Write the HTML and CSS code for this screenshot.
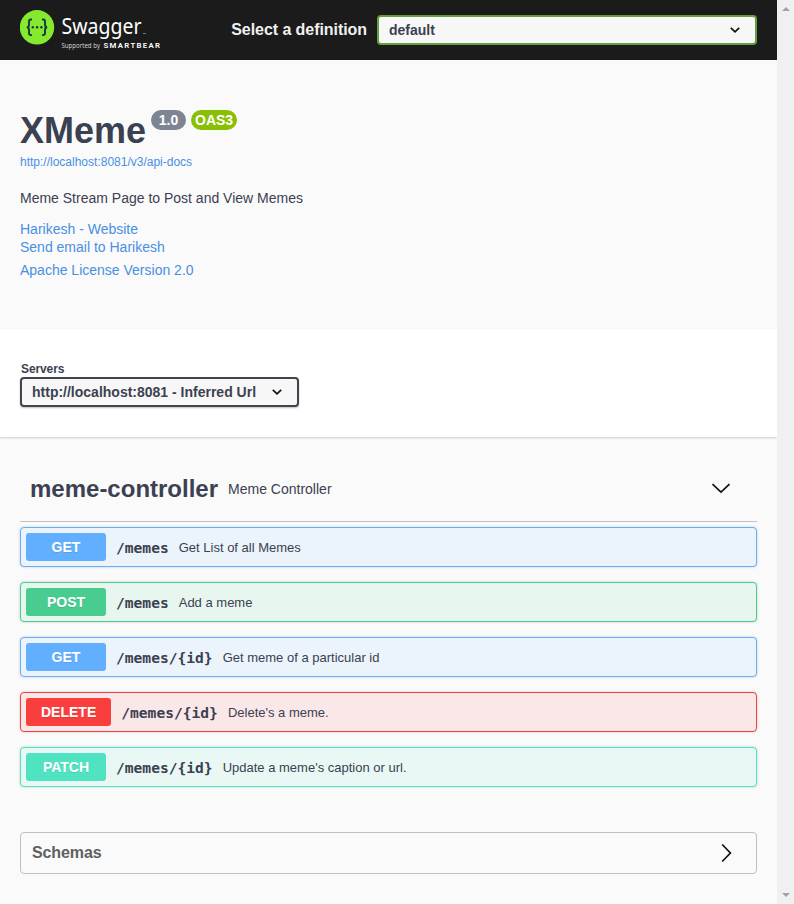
FILE: index.html
```html
<!DOCTYPE html>
<html lang="en">
<head>
<meta charset="utf-8">
<title>Swagger UI</title>
<link rel="stylesheet" href="styles.css">
</head>
<body>
<div class="page">
<main class="content">
  <header class="topbar">
    <svg class="logo" width="150" height="60" viewBox="0 0 150 60" role="img" aria-label="Swagger">
      <circle cx="17" cy="27.3" r="17.2" fill="#85ea2d"/>
      <g fill="none" stroke="#173647" stroke-width="1.9">
        <path d="M12 19.500h-1.200q-1.800 0-1.800 2v3q0 2.800-2.200 2.800q2.200 0 2.200 2.800v3q0 2 1.800 2H12"/>
        <path d="M22 19.500h1.200q1.800 0 1.800 2v3q0 2.800 2.200 2.800q-2.200 0-2.200 2.800v3q0 2-1.800 2H22"/>
      </g>
      <g fill="#173647"><circle cx="12.8" cy="27.3" r="1.2"/><circle cx="17.1" cy="27.3" r="1.2"/><circle cx="21.4" cy="27.3" r="1.2"/></g>
      <text class="logo-name" x="41.5" y="34" textLength="80" lengthAdjust="spacingAndGlyphs">Swagger</text>
      <path d="M123 33.5h3" stroke="#888" stroke-width=".8"/>
      <text class="logo-by" x="41.5" y="48" textLength="38.5" lengthAdjust="spacingAndGlyphs">Supported by</text>
      <text class="logo-brand" x="83.5" y="48" textLength="56.5" lengthAdjust="spacing">SMARTBEAR</text>
    </svg>
    <label class="definition"><span>Select a definition</span>
      <span class="select select-top">default
        <svg width="10" height="6" viewBox="0 0 10 6"><path d="M.8.8 5 4.8 9.2.8"/></svg>
      </span>
    </label>
  </header>

  <section class="info">
    <h1>XMeme<span class="badge version">1.0</span><span class="badge oas">OAS3</span></h1>
    <a class="docs">http://localhost:8081/v3/api-docs</a>
    <p>Meme Stream Page to Post and View Memes</p>
    <a>Harikesh - Website</a>
    <a>Send email to Harikesh</a>
    <a class="license">Apache License Version 2.0</a>
  </section>

  <section class="servers">
    <span class="servers-title">Servers</span>
    <span class="select select-server">http://localhost:8081 - Inferred Url
      <svg width="10" height="6" viewBox="0 0 10 6"><path d="M.8.8 5 4.8 9.2.8"/></svg>
    </span>
  </section>

  <section class="operations">
    <div class="tag">
      <h2>meme-controller</h2><small>Meme Controller</small>
      <svg width="20" height="11" viewBox="0 0 20 11"><path d="M1.5 1.2 10 9.2 18.5 1.2"/></svg>
    </div>
    <div class="op get"><b>GET</b><code>/memes</code><span>Get List of all Memes</span></div>
    <div class="op post"><b>POST</b><code>/memes</code><span>Add a meme</span></div>
    <div class="op get"><b>GET</b><code>/memes/{id}</code><span>Get meme of a particular id</span></div>
    <div class="op delete"><b>DELETE</b><code>/memes/{id}</code><span>Delete's a meme.</span></div>
    <div class="op patch"><b>PATCH</b><code>/memes/{id}</code><span>Update a meme's caption or url.</span></div>
  </section>

  <section class="schemas">
    <h3>Schemas</h3>
    <svg width="11" height="20" viewBox="0 0 11 20"><path d="M1.2 1.5 9.4 10 1.2 18.5"/></svg>
  </section>
</main>
<aside class="scrollbar"><i class="up"></i><i class="down"></i></aside>
</div>
</body>
</html>
```
FILE: styles.css
```css
* { box-sizing: border-box; }
body {
  margin: 0;
  background: #fafafa;
  color: #3b4151;
  font-family: "Liberation Sans", Arial, sans-serif;
}
.page { display: flex; width: 794px; height: 904px; overflow: hidden; }
.content { width: 777px; }
svg { display: block; flex: none; }

.topbar {
  display: flex;
  justify-content: space-between;
  height: 60px;
  padding: 0 20px;
  background: #1b1b1b;
}
.logo-name { font: 400 22.5px "Noto Sans", sans-serif; fill: #fff; }
.logo-by { font: 6.5px "Open Sans", sans-serif; fill: #ddd; }
.logo-brand { font: 600 7.8px Roboto, sans-serif; fill: #fff; }
.definition {
  display: flex;
  align-items: center;
  gap: 10px;
  color: #f0f0f0;
  font-size: 16px;
  font-weight: bold;
  letter-spacing: -.06px;
}
.select {
  display: flex;
  align-items: center;
  justify-content: space-between;
  height: 30px;
  padding: 0 15px 0 10px;
  border: 2px solid #41444e;
  border-radius: 4px;
  background: #f7f7f7;
  color: #3b4151;
  font-size: 14px;
  font-weight: bold;
  letter-spacing: 0;
  white-space: nowrap;
}
.select path, .tag path, .schemas path { fill: none; stroke: #111; stroke-width: 1.7; }
.select-top { width: 380px; border-color: #62a03f; }
.select-server { width: 279px; box-shadow: 0 1px 2px rgba(0, 0, 0, .25); }

.info { height: 269px; padding: 50px 20px 0; font-size: 14px; }
.info h1 {
  display: flex;
  align-items: flex-start;
  height: 43px;
  margin: 0;
  font-size: 36px;
  line-height: 41px;
}
.badge {
  height: 20px;
  border-radius: 10px;
  color: #fff;
  font-size: 14px;
  line-height: 21px;
  text-align: center;
}
.version { width: 35px; margin-left: 5px; background: #7d8492; }
.oas { width: 46px; margin-left: 5px; background: #89bf04; }
.info a { display: block; height: 18px; color: #4990e2; line-height: 18px; }
.info a.docs { font-size: 12px; line-height: 19px; }
.info p { height: 18px; margin: 18px 0 13px; line-height: 18px; }
.info a.license { margin-top: 5px; }

.servers {
  height: 108px;
  padding: 33px 20px 0;
  background: #fff;
  box-shadow: 0 1px 2px rgba(0, 0, 0, .18);
}
.servers-title {
  display: block;
  height: 15px;
  margin-left: 1px;
  font-size: 12px;
  font-weight: bold;
  letter-spacing: -.1px;
  line-height: 15px;
}

.operations { padding: 21px 20px 0; }
.tag {
  display: flex;
  align-items: center;
  height: 64px;
  margin-bottom: 5px;
  padding: 0 26px 2px 10px;
  border-bottom: 1px solid #bfc0c4;
}
.tag h2 { margin: 0; font-size: 24px; }
.tag small { margin-left: 10px; font-size: 14px; }
.tag svg { margin-left: auto; }
.op {
  display: flex;
  align-items: center;
  height: 40px;
  margin-bottom: 15px;
  padding: 0 5px;
  border: 1px solid var(--c);
  border-radius: 4px;
  background: var(--bg);
  box-shadow: 0 0 3px rgba(0, 0, 0, .19);
  font-size: 13px;
}
.op b {
  min-width: 80px;
  height: 28px;
  padding: 0 15px;
  border-radius: 3px;
  background: var(--c);
  color: #fff;
  font-size: 14px;
  line-height: 28px;
  text-align: center;
  text-shadow: 0 1px 0 rgba(0, 0, 0, .1);
}
.op code {
  margin-left: 10px;
  font: bold 14.6px "DejaVu Sans Mono", monospace;
}
.op span { margin-left: 10px; }
.get { --c: #61affe; --bg: #ebf3fb; }
.post { --c: #49cc90; --bg: #e8f6f0; }
.delete { --c: #f93e3e; --bg: #fae7e7; }
.patch { --c: #50e3c2; --bg: #e9f8f5; }

.schemas {
  display: flex;
  align-items: center;
  justify-content: space-between;
  height: 42px;
  margin: 45px 20px 0;
  padding: 0 24px 0 11px;
  border: 1px solid #bfc0c4;
  border-radius: 4px;
}
.operations .op:last-child { margin-bottom: 0; }
.schemas h3 { margin: 0; color: #606060; font-size: 16px; letter-spacing: -.1px; }

.scrollbar {
  display: flex;
  flex-direction: column;
  align-items: center;
  justify-content: space-between;
  width: 17px;
  padding: 7px 0;
  background: #f0f0f0;
}
.scrollbar i { border: 4px solid transparent; }
.scrollbar .up { border-top: 0; border-bottom-color: #a3a3a3; }
.scrollbar .down { border-bottom: 0; border-top-color: #a3a3a3; }
```
